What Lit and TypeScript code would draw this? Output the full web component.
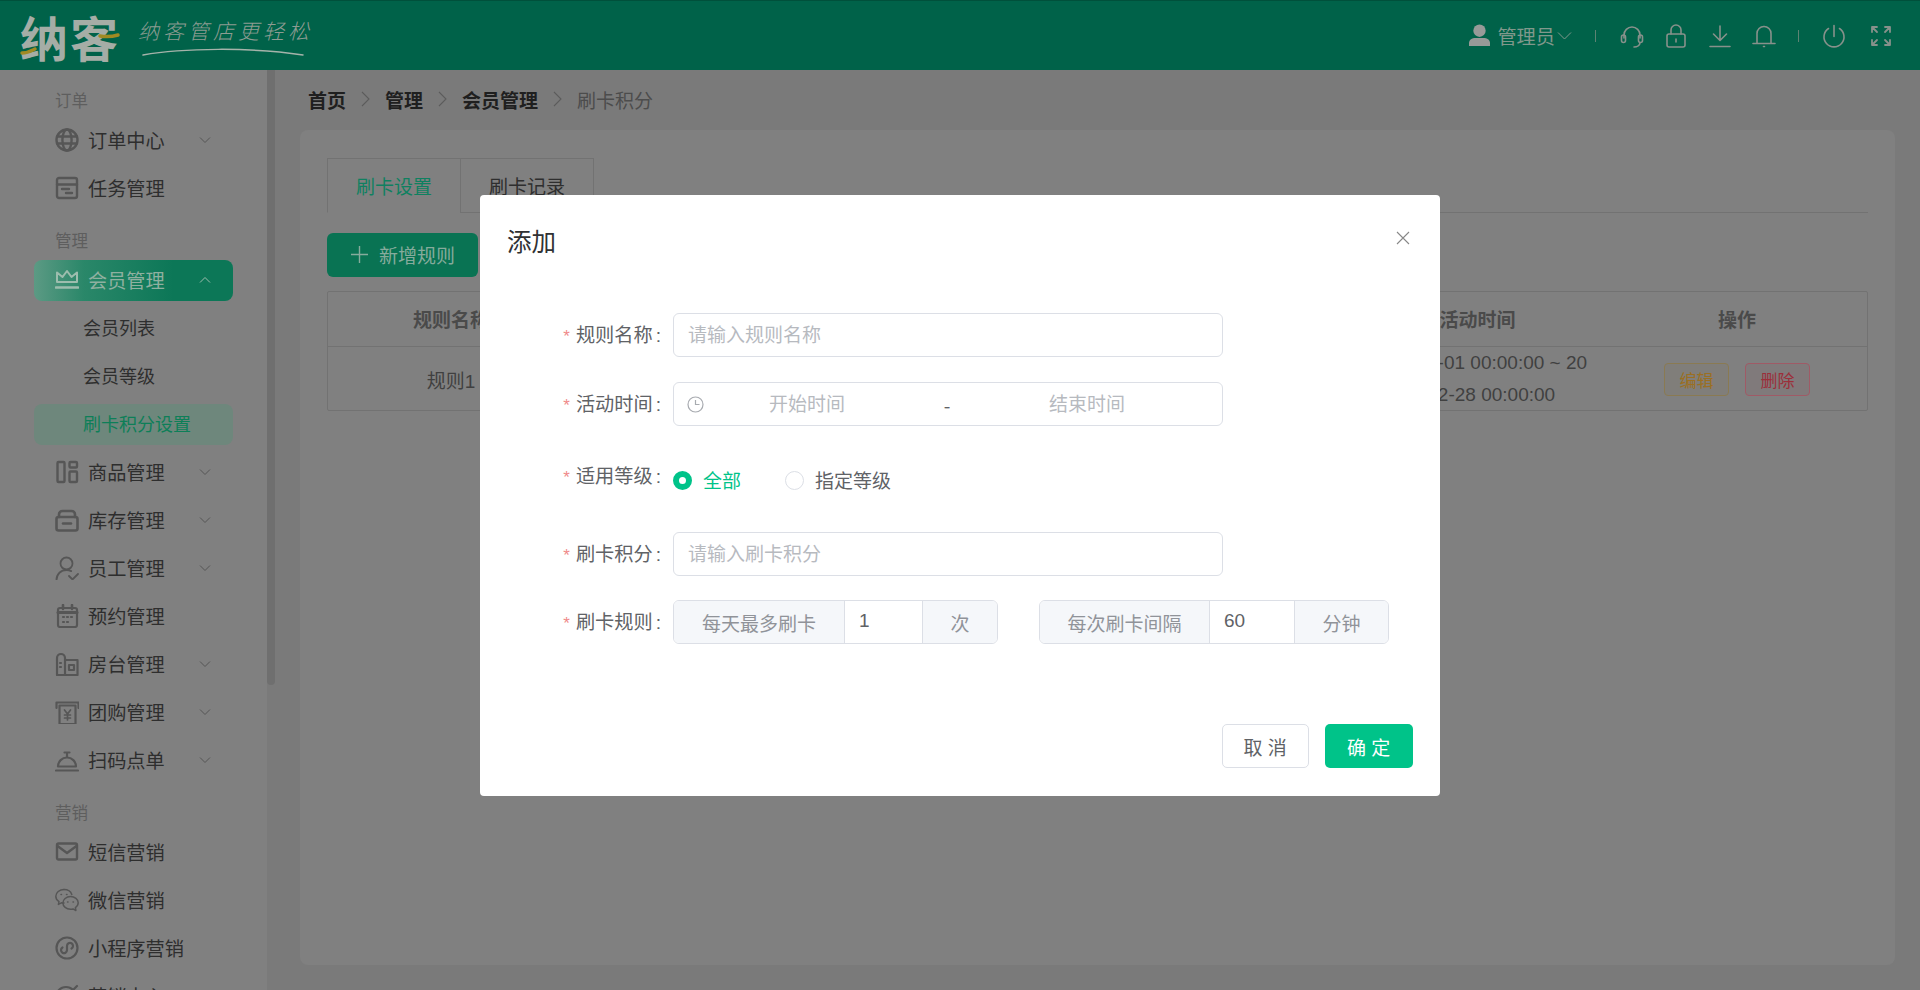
import { LitElement, html, css, svg } from "lit";
import { customElement } from "lit/decorators.js";

const I = (body: unknown, sw = 2) => html`<svg viewBox="0 0 24 24" fill="none" stroke="currentColor" stroke-width=${sw} stroke-linecap="round" stroke-linejoin="round">${body}</svg>`;

const icons: Record<string, unknown> = {
  globe: I(svg`<circle cx="12" cy="12" r="10.5"/><ellipse cx="12" cy="12" rx="4.6" ry="10.5"/><path d="M2 8.5h20M2 15.5h20"/>`, 2.4),
  task: I(svg`<rect x="2" y="2" width="20" height="20" rx="2"/><path d="M2 8.5h20M7 13h7M11 17h6"/>`, 2.4),
  crown: I(svg`<path d="M2 14V4.5l5.5 4.5L12 3l4.5 6L22 4.5V14z"/><path d="M1 19.5h22" stroke-width="2.6"/>`),
  goods: I(svg`<rect x="2.5" y="2" width="7" height="20" rx="1"/><rect x="14.5" y="2" width="7.5" height="5.5" rx="1"/><rect x="14.5" y="11.5" width="7.5" height="10.5" rx="1"/>`, 2.4),
  box: I(svg`<path d="M4 9V6.5A3.5 3.5 0 0 1 7.500 3h9A3.500 3.500 0 0 1 20 6.500V9"/><rect x="1.500" y="9" width="21" height="13.500" rx="2"/><path d="M8 15.500h8"/>`, 2.6),
  user: I(svg`<circle cx="11.500" cy="7.500" r="6"/><path d="M1.500 24c0-6 4.500-10 10-10 1.800 0 3.300.4 4.700 1.100"/><path d="M14 20l3.500 3.500 5.500-5.500"/>`, 1.8),
  cal: I(svg`<rect x="3" y="4" width="19" height="19" rx="2"/><path d="M3 8.500h19" stroke-width="3"/><path d="M8 1v4M17 1v4" stroke-width="2.600"/><path d="M8 13h1M12 13h1M16 13h1M8 18h1M12 18h1" stroke-width="2.200"/>`, 2.2),
  house: I(svg`<path d="M2 23V6c0-2.500 2-4 4-4s4 1.500 4 4v2h12.500v15z"/><path d="M10 8v15M5 11h1M5 15h1M14 13h5v5h-5z"/>`, 2.2),
  group: I(svg`<path d="M1.500 8V2.500h22V8"/><path d="M4.500 5.500H20.500V24h-16z"/><path d="M9.500 10l3 4 3-4M12.500 14v6M9.500 15h6M9.500 18h6" stroke-width="1.700"/>`, 2.2),
  ring: I(svg`<path d="M3 18.500a9 9 0 0 1 18 0z"/><path d="M12 9V6M9.500 4.500h5M1 22.500h22"/>`, 2.2),
  mail: I(svg`<rect x="2" y="3.500" width="20" height="16" rx="1.500"/><path d="M2.500 6l9.500 7 9.500-7"/>`, 2.4),
  wechat: I(svg`<path d="M9 1.500C4.500 1.500 .800 4.500.800 8.200c0 2.200 1.300 4.200 3.200 5.400l-.6 2.800 3-1.600c.8.200 1.700.3 2.600.3"/><path d="M9 1.500c3.800 0 6.800 2 7.800 5"/><path d="M15.500 8.500c4.200 0 7.700 2.900 7.700 6.300 0 2-1.100 3.700-2.800 4.800l.5 2.900-2.900-1.600c-.8.200-1.600.3-2.500.3-4.200 0-7.600-2.800-7.600-6.200s3.400-6.500 7.600-6.500z"/><path d="M6 6.500h.5M11.500 6.500h.5M12.500 14h.5M18 14h.5"/>`, 1.500),
  mini: I(svg`<circle cx="12" cy="12" r="10.500"/><path d="M7.500 11.500a3 3 0 1 0 4.500 2.600v-4.200a3 3 0 1 1 4.500 2.600"/>`, 2.2),
  target: I(svg`<circle cx="11" cy="13" r="10"/><circle cx="11" cy="13" r="4"/><path d="M11 13L22 2"/>`, 2.2),
};

const chevDown = html`<svg class="chev" viewBox="0 0 12 8" fill="none" stroke="currentColor" stroke-width="1"><path d="M1 1.500l5 5 5-5"/></svg>`;
const chevUp = html`<svg class="chev" viewBox="0 0 12 8" fill="none" stroke="currentColor" stroke-width="1"><path d="M1 6.500l5-5 5 5"/></svg>`;
const chevRight = html`<svg class="crumb-sep" viewBox="0 0 10 16" fill="none" stroke="currentColor" stroke-width="1.100"><path d="M1.500 1l7 7-7 7"/></svg>`;

type Entry =
  | { kind: "label"; text: string }
  | { kind: "item"; text: string; icon: string; arrow?: boolean; open?: boolean }
  | { kind: "sub"; text: string; active?: boolean };

const menu: Entry[] = [
  { kind: "label", text: "订单" },
  { kind: "item", text: "订单中心", icon: "globe", arrow: true },
  { kind: "item", text: "任务管理", icon: "task" },
  { kind: "label", text: "管理" },
  { kind: "item", text: "会员管理", icon: "crown", arrow: true, open: true },
  { kind: "sub", text: "会员列表" },
  { kind: "sub", text: "会员等级" },
  { kind: "sub", text: "刷卡积分设置", active: true },
  { kind: "item", text: "商品管理", icon: "goods", arrow: true },
  { kind: "item", text: "库存管理", icon: "box", arrow: true },
  { kind: "item", text: "员工管理", icon: "user", arrow: true },
  { kind: "item", text: "预约管理", icon: "cal" },
  { kind: "item", text: "房台管理", icon: "house", arrow: true },
  { kind: "item", text: "团购管理", icon: "group", arrow: true },
  { kind: "item", text: "扫码点单", icon: "ring", arrow: true },
  { kind: "label", text: "营销" },
  { kind: "item", text: "短信营销", icon: "mail" },
  { kind: "item", text: "微信营销", icon: "wechat" },
  { kind: "item", text: "小程序营销", icon: "mini" },
  { kind: "item", text: "营销中心", icon: "target" },
];

@customElement("app-root")
export class AppRoot extends LitElement {
  static styles = css`
    :host {
      display: block;
      position: relative;
      width: 100%;
      height: 990px;
      overflow: hidden;
      font-family: "Noto Sans CJK SC", "Liberation Sans", sans-serif;
      background: #7a7a7a;
    }
    * { box-sizing: border-box; }
    svg { display: block; flex: none; }
    .layout { display: flex; flex-direction: column; height: 100%; }

    .header {
      height: 70px;
      flex: none;
      background: #006249;
      border-top: 1px solid #00503b;
      display: flex;
      align-items: center;
      padding: 0 27px 0 20px;
    }
    .logo { display: flex; align-items: center; gap: 18px; position: relative; height: 60px; }
    .logo-main { font-size: 48px; font-weight: 700; line-height: 60px; color: #a5ada6; letter-spacing: 2px; }
    .logo-swoosh { position: absolute; left: 0; top: 0; width: 130px; height: 60px; }
    .tag { position: relative; width: 172px; height: 46px; }
    .tag-text { font-size: 21px; font-style: italic; font-weight: 300; letter-spacing: 4px; line-height: 34px; color: #8d9c92; white-space: nowrap; }
    .tag-line { position: absolute; left: 4px; top: 34px; width: 162px; height: 10px; }
    .head-right { margin-left: auto; display: flex; align-items: center; color: #87918b; }
    .head-right svg { width: 24px; height: 24px; }
    .head-right .avatar { width: 21px; height: 23px; color: #979a98; margin-right: 7px; }
    .uname { font-size: 19.200px; color: #80988c; }
    .head-right .uchev { width: 15px; height: 10px; margin-left: 2px; margin-right: 23px; color: #80988c; }
    .vsep { width: 1px; height: 12px; background: #5d8373; }
    .hicons { display: flex; gap: 20px; margin-left: 24px; margin-right: 22px; }
    .ptail { display: flex; gap: 23px; margin-left: 23px; }

    .body { flex: 1; display: flex; min-height: 0; }
    .side-wrap { width: 275px; flex: none; display: flex; background: #808080; }
    .side { width: 267px; padding-top: 2px; overflow: hidden; }
    .track { width: 8px; background: #7a7a7a; }
    .thumb { height: 615px; background: #6f6f6f; border-radius: 0 0 4px 4px; }
    .m-label { height: 44px; display: flex; align-items: flex-end; padding: 0 0 4px 55px; font-size: 16.500px; line-height: 24px; color: #5e5e5e; }
    .m-item { height: 48px; padding: 3.500px 34px; }
    .pill { height: 41px; border-radius: 8px; display: flex; align-items: center; padding: 0 22px 0 21px; font-size: 19.200px; color: #2e2e2e; }
    .pill .ico { width: 24px; height: 24px; margin-right: 9px; color: #565656; }
    .chev { width: 12px; height: 8px; margin-left: auto; color: #555; }
    .pill.open { background: linear-gradient(90deg, #5c9a84 0%, #2a8769 25%, #0c7757 70%); color: #8fb0a0; }
    .pill.open .ico, .pill.open .chev { color: #9dbdae; }
    .sub-pill { height: 41px; border-radius: 8px; display: flex; align-items: center; padding: 0 0 3px 49px; font-size: 18px; color: #2e2e2e; }
    .sub-pill.active { background: #6e877c; color: #0d7f58; }

    .main { flex: 1; min-width: 0; display: flex; flex-direction: column; padding: 0 25px 25px; }
    .crumbs { height: 60px; flex: none; display: flex; align-items: center; padding: 0 0 2px 8px; font-size: 19px; color: #1f1f1f; font-weight: 700; }
    .crumbs .last { font-weight: 400; color: #4c4c4c; }
    .crumb-sep { width: 39px; height: 16px; color: #5c5c5c; }
    .card { flex: 1; background: #808080; border-radius: 8px; padding: 28px 27px; }
    .tabs { display: flex; height: 55px; border-bottom: 1px solid #727272; }
    .tab { width: 134px; height: 55px; display: flex; align-items: center; justify-content: center; font-size: 19px; color: #2e2e2e; border: 1px solid #727272; margin-left: -1px; }
    .tab:first-child { margin-left: 0; }
    .tab.on { color: #0f8060; border-bottom-color: #808080; }
    .add { margin-top: 20px; width: 151px; height: 44px; border-radius: 6px; background: #097353; color: #86ab9c; display: flex; align-items: center; padding: 0 0 2px 24px; font-size: 19px; gap: 11px; }
    .add svg { width: 17px; height: 17px; }
    .table { margin-top: 14px; border: 1px solid #727272; border-radius: 2px; }
    .row { display: grid; grid-template-columns: 246px 774px 259px 1fr; align-items: center; text-align: center; font-size: 19px; }
    .row.hd { height: 55px; border-bottom: 1px solid #727272; font-weight: 700; color: #4a4a4a; padding-bottom: 2px; }
    .row.bd { height: 63px; color: #404040; font-family: "Liberation Sans", "Noto Sans CJK SC", sans-serif; }
    .timecell { padding: 0 17px; line-height: 32px; word-break: break-all; }
    .ops { display: flex; justify-content: center; gap: 16px; }
    .op { width: 65px; height: 33px; border-radius: 4px; font-size: 17px; display: flex; align-items: center; justify-content: center; font-family: "Noto Sans CJK SC", sans-serif; }
    .op.edit { border: 1px solid #8a7a52; background: #807e7a; color: #9b6f22; }
    .op.del { border: 1px solid #a05a66; background: #807a7b; color: #9c2f3a; }

    .overlay { position: absolute; inset: 0; display: flex; justify-content: center; align-items: flex-start; padding-top: 195px; }
    .modal { width: 960px; height: 601px; background: #fff; border-radius: 4px; display: flex; flex-direction: column; }
    .m-head { height: 94px; flex: none; display: flex; align-items: center; justify-content: space-between; padding: 0 30px 3px 27px; }
    .m-title { font-size: 24.500px; color: #303133; }
    .m-x { width: 14px; height: 14px; margin-top: -6px; color: #888; }
    .form { padding-top: 24px; }
    .f-row { display: flex; align-items: center; height: 44px; margin-bottom: 25px; }
    .f-row.tight { margin-bottom: 24px; }
    .f-row.radios { height: 56px; align-items: flex-start; }
    .f-label { width: 183px; margin-right: 10px; flex: none; text-align: right; font-size: 19.200px; line-height: 44px; color: #606266; white-space: nowrap; padding-right: 2px; }
    .f-row.radios .f-label { line-height: 48px; }
    .colon { margin-left: 3px; font-family: "Liberation Sans", sans-serif; }
    .star { color: #f08a8a; font-size: 17px; margin-right: 6px; font-family: "Liberation Sans", sans-serif; }
    input { font: inherit; outline: none; border: none; background: transparent; min-width: 0; color: #606266; }
    input::placeholder { color: #b7babf; opacity: 1; }
    .text-input { width: 550px; height: 44px; border: 1px solid #dcdfe6; border-radius: 6px; padding: 0 14px 4px; font-size: 19px; }
    .range { width: 550px; height: 44px; border: 1px solid #dcdfe6; border-radius: 6px; display: flex; align-items: center; padding-left: 13px; font-size: 19px; color: #606266; }
    .range svg { width: 17px; height: 17px; margin-right: 6px; color: #a8abb0; }
    .range input { width: 194px; text-align: center; padding-bottom: 5px; }
    .range .dash { width: 86px; text-align: center; }
    .radio-set { display: flex; align-items: center; height: 58px; font-size: 19px; }
    .dot { width: 19px; height: 19px; border-radius: 50%; border: 1px solid #dcdfe6; flex: none; }
    .dot.on { border: 6px solid #00c389; background: #fff; }
    .radio-text { margin-left: 11px; padding-bottom: 2px; color: #606266; }
    .radio-text.on { color: #00c389; margin-right: 44px; }
    .group { display: flex; height: 44px; border: 1px solid #dcdfe6; border-radius: 6px; overflow: hidden; font-size: 19px; color: #909399; }
    .group .cap { background: #f5f7fa; display: flex; align-items: center; justify-content: center; }
    .group input { border-left: 1px solid #dcdfe6; border-right: 1px solid #dcdfe6; padding: 0 14px 3px; font-family: "Liberation Sans", sans-serif; font-size: 19px; }
    .g1 { width: 325px; margin-right: 41px; }
    .g1 .c1 { width: 170px; } .g1 input { width: 79px; } .g1 .c2 { flex: 1; }
    .g2 { width: 350px; }
    .g2 .c1 { width: 169px; } .g2 input { width: 86px; } .g2 .c2 { flex: 1; }
    .m-foot { margin-top: auto; display: flex; justify-content: flex-end; gap: 16px; padding: 0 27px 28px; }
    .btn { width: 87px; height: 44px; border-radius: 5px; display: flex; align-items: center; justify-content: center; font-size: 19px; letter-spacing: .5px; white-space: pre; }
    .btn.cancel { border: 1px solid #dcdfe6; color: #606266; background: #fff; }
    .btn.ok { width: 88px; background: #00c389; color: #fff; }
  `;

  private entry(e: Entry) {
    if (e.kind === "label") return html`<div class="m-label">${e.text}</div>`;
    if (e.kind === "sub")
      return html`<div class="m-item"><div class="sub-pill ${e.active ? "active" : ""}">${e.text}</div></div>`;
    return html`<div class="m-item">
      <div class="pill ${e.open ? "open" : ""}">
        <span class="ico">${icons[e.icon]}</span>${e.text}
        ${e.arrow ? (e.open ? chevUp : chevDown) : ""}
      </div>
    </div>`;
  }

  private label(text: string) {
    return html`<div class="f-label"><span class="star">*</span>${text}<span class="colon">:</span></div>`;
  }

  render() {
    return html`
      <div class="layout">
        <header class="header">
          <div class="logo">
            <div class="logo-main">纳客</div>
            <svg class="logo-swoosh" viewBox="0 0 130 60" fill="none" stroke="#a08a22" stroke-width="3.500" stroke-linecap="round">
              <path d="M2 47c6 0 9-2 13-4"/><path d="M80 30c6 1 11 1 18-1"/>
            </svg>
            <div class="tag">
              <div class="tag-text">纳客管店更轻松</div>
              <svg class="tag-line" viewBox="0 0 162 10" fill="none" stroke="#a5b3aa" stroke-width="1.500" stroke-linecap="round">
                <path d="M1 8C40 1 110 0 161 8"/>
              </svg>
            </div>
          </div>
          <div class="head-right">
            <svg class="avatar" viewBox="0 0 22 24" fill="currentColor"><circle cx="11" cy="7" r="6.500"/><path d="M0 23v-3c0-3.500 3-5.500 7-5.500h8c4 0 7 2 7 5.500v3z"/></svg>
            <span class="uname">管理员</span>
            <svg class="uchev" viewBox="0 0 15 10" fill="none" stroke="currentColor" stroke-width="1"><path d="M1 1.500l6.500 6.500L14 1.500"/></svg>
            <span class="vsep"></span>
            <div class="hicons">
              ${I(svg`<path d="M4 14V11a8 8 0 0 1 16 0v3"/><rect x="1.500" y="11" width="4" height="7.500" rx="2"/><rect x="18.500" y="11" width="4" height="7.500" rx="2"/><path d="M20 18.500c0 3-3 4.500-6 4.500"/>`, 1.600)}
              ${I(svg`<rect x="3" y="10" width="18" height="13" rx="2"/><path d="M7 10V6a5 5 0 0 1 10 0v4M12 15v3"/>`, 1.600)}
              ${I(svg`<path d="M12 2v14M5.500 10l6.500 6.500 6.500-6.500M2 22.500h20"/>`, 1.600)}
              ${I(svg`<path d="M5 19V9.500a7 7 0 0 1 14 0V19M1 19.500h22M11.500 2.500h1M11.500 22.500h1"/>`, 1.600)}
            </div>
            <span class="vsep"></span>
            <div class="ptail">
              ${I(svg`<path d="M12 1.500v11M6.500 4.500a10 10 0 1 0 11 0"/>`, 1.600)}
              ${I(svg`<path d="M3 8V3h5M3 3l5 5M21 8V3h-5M21 3l-5 5M3 16v5h5M3 21l5-5M21 16v5h-5M21 21l-5-5"/>`, 1.800)}
            </div>
          </div>
        </header>
        <div class="body">
          <div class="side-wrap">
            <nav class="side">${menu.map((e) => this.entry(e))}</nav>
            <div class="track"><div class="thumb"></div></div>
          </div>
          <main class="main">
            <div class="crumbs">
              <span>首页</span>${chevRight}<span>管理</span>${chevRight}<span>会员管理</span>${chevRight}<span class="last">刷卡积分</span>
            </div>
            <section class="card">
              <div class="tabs">
                <div class="tab on">刷卡设置</div>
                <div class="tab">刷卡记录</div>
              </div>
              <div class="add">
                <svg viewBox="0 0 17 17" fill="none" stroke="currentColor" stroke-width="1.400"><path d="M8.500 0v17M0 8.500h17"/></svg>
                新增规则
              </div>
              <div class="table">
                <div class="row hd"><div>规则名称</div><div></div><div>活动时间</div><div>操作</div></div>
                <div class="row bd">
                  <div>规则1</div><div></div>
                  <div class="timecell">2023-01-01 00:00:00 ~ 2023-02-28 00:00:00</div>
                  <div class="ops"><div class="op edit">编辑</div><div class="op del">删除</div></div>
                </div>
              </div>
            </section>
          </main>
        </div>
      </div>

      <div class="overlay">
        <div class="modal">
          <div class="m-head">
            <div class="m-title">添加</div>
            <svg class="m-x" viewBox="0 0 14 14" fill="none" stroke="currentColor" stroke-width="1.100"><path d="M1 1l12 12M13 1L1 13"/></svg>
          </div>
          <div class="form">
            <div class="f-row">
              ${this.label("规则名称")}
              <input class="text-input" placeholder="请输入规则名称" />
            </div>
            <div class="f-row">
              ${this.label("活动时间")}
              <div class="range">
                <svg viewBox="0 0 17 17" fill="none" stroke="currentColor" stroke-width="1.200"><circle cx="8.500" cy="8.500" r="7.500"/><path d="M8.500 4v4.500h4"/></svg>
                <input placeholder="开始时间" />
                <span class="dash">-</span>
                <input placeholder="结束时间" />
              </div>
            </div>
            <div class="f-row radios">
              ${this.label("适用等级")}
              <div class="radio-set">
                <span class="dot on"></span><span class="radio-text on">全部</span>
                <span class="dot"></span><span class="radio-text">指定等级</span>
              </div>
            </div>
            <div class="f-row tight">
              ${this.label("刷卡积分")}
              <input class="text-input" placeholder="请输入刷卡积分" />
            </div>
            <div class="f-row">
              ${this.label("刷卡规则")}
              <div class="group g1"><div class="cap c1">每天最多刷卡</div><input .value=${"1"} /><div class="cap c2">次</div></div>
              <div class="group g2"><div class="cap c1">每次刷卡间隔</div><input .value=${"60"} /><div class="cap c2">分钟</div></div>
            </div>
          </div>
          <div class="m-foot">
            <div class="btn cancel">取 消</div>
            <div class="btn ok">确 定</div>
          </div>
        </div>
      </div>
    `;
  }
}
